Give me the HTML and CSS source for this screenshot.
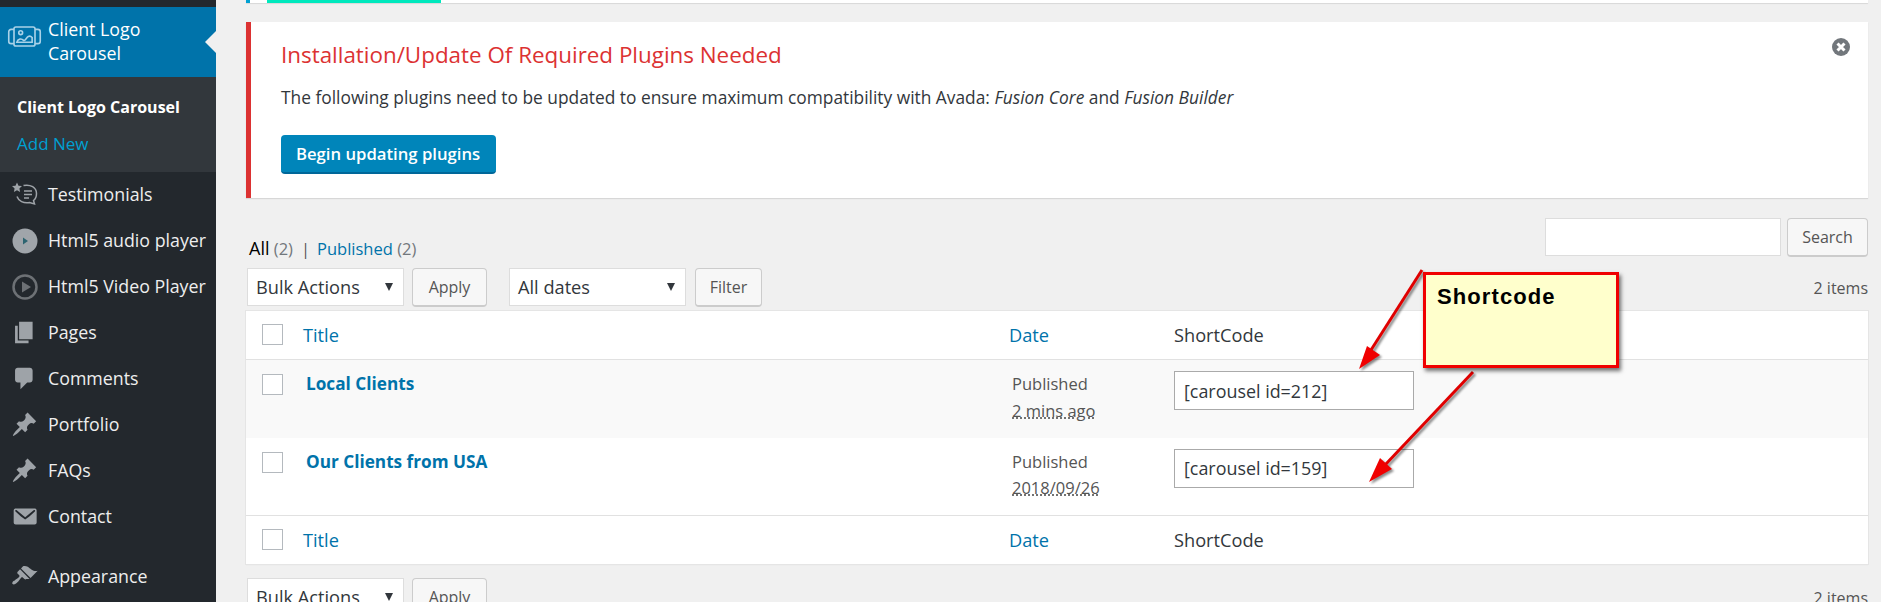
FILE: index.html
```html
<!DOCTYPE html>
<html lang="en">
<head>
<meta charset="utf-8">
<title>Client Logo Carousel</title>
<link rel="stylesheet" href="styles.css">
</head>
<body>
<aside class="sidebar">
  <nav class="menu">
    <div class="menu-top"></div>
    <a class="item active">
      <svg class="icon carousel" viewBox="0 0 36 22" fill="none" stroke="#a9d2e8" stroke-width="1.7"><rect x="7" y="1" width="22" height="20" rx="2"/><path d="M7 3.500H4a2.500 2.500 0 0 0-2.500 2.500v10A2.500 2.500 0 0 0 4 18.500h3M29 3.500h3a2.500 2.500 0 0 1 2.500 2.500v10a2.500 2.500 0 0 1-2.500 2.500h-3"/><circle cx="14" cy="7" r="2"/><path d="M10 17c1-4 5-4 7-2 2 1 3-3 5-4 1-.500 3 0 4 1v5z"/></svg>
      <span>Client Logo<br>Carousel</span>
    </a>
    <div class="submenu">
      <a class="sub current">Client Logo Carousel</a>
      <a class="sub">Add New</a>
    </div>
    <a class="item">
      <svg class="icon testi" viewBox="0 0 28 24" fill="none" stroke="#9ea3a8" stroke-width="1.500"><path d="M6 .500l1.500 3.200 3.500.400-2.600 2.400.7 3.500L6 8.300 2.900 10l.7-3.500L1 4.100l3.500-.400z" fill="#9ea3a8" stroke="none"/><path d="M12.500 3.500c7-1.500 13 2 13 8 0 3.500-1 5.500-3 7l1 3.500-5-1.500c-6 1-11-1.500-12.500-6"/><path d="M13 9h8M13 12.500h8M13 16h5" stroke-width="1.300"/></svg>
      <span>Testimonials</span>
    </a>
    <a class="item">
      <svg class="icon round" viewBox="0 0 26 26"><circle cx="13" cy="13" r="12.500" fill="#a0a5aa"/><path d="M11 9.500l5 3.500-5 3.500z" fill="#2c6470"/></svg>
      <span>Html5 audio player</span>
    </a>
    <a class="item">
      <svg class="icon round" viewBox="0 0 26 26" fill="none"><circle cx="13" cy="13" r="11.500" stroke="#6d7175" stroke-width="2.500"/><path d="M10 7.500l9 5.500-9 5.500z" fill="#6d7175"/></svg>
      <span>Html5 Video Player</span>
    </a>
    <a class="item">
      <svg class="icon dash" viewBox="0 0 20 20"><use href="#d-page"/></svg>
      <span>Pages</span>
    </a>
    <a class="item">
      <svg class="icon dash" viewBox="0 0 20 20"><use href="#d-comment"/></svg>
      <span>Comments</span>
    </a>
    <a class="item">
      <svg class="icon dash" viewBox="0 0 20 20"><use href="#d-pin"/></svg>
      <span>Portfolio</span>
    </a>
    <a class="item">
      <svg class="icon dash" viewBox="0 0 20 20"><use href="#d-pin"/></svg>
      <span>FAQs</span>
    </a>
    <a class="item">
      <svg class="icon dash" viewBox="0 0 20 20"><use href="#d-mail"/></svg>
      <span>Contact</span>
    </a>
    <a class="item spaced">
      <svg class="icon dash" viewBox="0 0 20 20"><use href="#d-brush"/></svg>
      <span>Appearance</span>
    </a>
  </nav>
</aside>

<main class="content">
  <div class="top-strip"><i class="strip-blue"></i><i class="strip-teal"></i></div>

  <section class="notice">
    <h2 class="notice-title">Installation/Update Of Required Plugins Needed</h2>
    <p class="notice-text">The following plugins need to be updated to ensure maximum compatibility with Avada: <em>Fusion Core</em> and <em>Fusion Builder</em></p>
    <a class="primary-btn">Begin updating plugins</a>
    <svg class="dismiss" viewBox="0 0 18 18"><circle cx="9" cy="9" r="9" fill="#72777c"/><path d="M5.500 5.500l7 7M12.500 5.500l-7 7" stroke="#fff" stroke-width="3"/></svg>
  </section>

  <div class="filters-top">
    <div class="views"><b class="view-current">All</b> <span class="count">(2)</span><span class="sep">|</span><a class="link">Published</a> <span class="count">(2)</span></div>
    <div class="search"><input class="search-box" type="text" aria-label="Search"><button class="btn search-btn">Search</button></div>
  </div>

  <div class="tablenav">
    <div class="select wide">Bulk Actions<i class="caret"></i></div>
    <button class="btn apply">Apply</button>
    <div class="select dates">All dates<i class="caret"></i></div>
    <button class="btn filter">Filter</button>
    <span class="items">2 items</span>
  </div>

  <table class="list">
    <thead>
      <tr class="head"><td class="c-check"><i class="check"></i></td><td class="c-title"><a class="link">Title</a></td><td class="c-date"><a class="link">Date</a></td><td>ShortCode</td></tr>
    </thead>
    <tbody>
      <tr class="row alt">
        <td class="c-check"><i class="check"></i></td>
        <td class="c-title"><a class="row-title">Local Clients</a></td>
        <td class="c-date body-date">Published<br><abbr class="when">2 mins ago</abbr></td>
        <td><input class="code" type="text" value="[carousel id=212]" aria-label="Shortcode"></td>
      </tr>
      <tr class="row">
        <td class="c-check"><i class="check"></i></td>
        <td class="c-title"><a class="row-title">Our Clients from USA</a></td>
        <td class="c-date body-date">Published<br><abbr class="when">2018/09/26</abbr></td>
        <td><input class="code" type="text" value="[carousel id=159]" aria-label="Shortcode"></td>
      </tr>
    </tbody>
    <tfoot>
      <tr class="foot"><td class="c-check"><i class="check"></i></td><td class="c-title"><a class="link">Title</a></td><td class="c-date"><a class="link">Date</a></td><td>ShortCode</td></tr>
    </tfoot>
  </table>

  <div class="tablenav bottom">
    <div class="select wide">Bulk Actions<i class="caret"></i></div>
    <button class="btn apply">Apply</button>
    <span class="items">2 items</span>
  </div>
</main>

<svg class="annotation-arrows" viewBox="0 0 1881 602">
  <g class="arrow-group">
    <path d="M1422 270L1371 350" stroke="#e00000" stroke-width="3" fill="none"/>
    <path d="M1359 369L1367 346L1380 355z" fill="#f00000"/>
    <path d="M1473 372L1385 465" stroke="#e00000" stroke-width="3" fill="none"/>
    <path d="M1369 482L1380 458L1392 469z" fill="#f00000"/>
  </g>
</svg>
<div class="callout">Shortcode</div>

<svg class="sprites" aria-hidden="true">
  <symbol id="d-page" viewBox="0 0 20 20"><path d="M6 15V2h10v13H6zm-1 1h8v2H3V5h2v11z"/></symbol>
  <symbol id="d-comment" viewBox="0 0 20 20"><path d="M5 2h9c1.100 0 2 .9 2 2v7c0 1.100-.9 2-2 2h-2l-5 5v-5H5c-1.100 0-2-.9-2-2V4c0-1.100.9-2 2-2z"/></symbol>
  <symbol id="d-pin" viewBox="0 0 20 20"><path d="M10.440 3.020l1.820-1.820 6.360 6.350-1.830 1.820c-1.050-.68-2.480-.57-3.410.36l-.75.75c-.92.93-1.040 2.350-.35 3.410l-1.830 1.820-2.410-2.410-2.800 2.790c-.42.42-3.380 2.710-3.800 2.290s1.860-3.390 2.280-3.810l2.790-2.790L4.100 9.360l1.830-1.820c1.050.69 2.480.57 3.400-.36l.75-.75c.93-.92 1.050-2.350.36-3.410z"/></symbol>
  <symbol id="d-mail" viewBox="0 0 20 20"><path d="M19 14.500v-9c0-.83-.67-1.500-1.500-1.500H3.490c-.83 0-1.500.67-1.500 1.500v9c0 .83.67 1.500 1.500 1.500H17.500c.83 0 1.500-.67 1.500-1.500zm-1.310-9.110c.33.33.15.67-.03.84L13.600 9.950l-3.100 2.300-3.100-2.300-4.060-3.720c-.18-.17-.36-.51-.03-.84s.67-.17.95.07l6.240 5.040 6.250-5.040c.28-.24.62-.4.95-.07z"/></symbol>
  <symbol id="d-brush" viewBox="0 0 20 20"><path d="M14.480 11.060L7.410 3.990l1.500-1.500c.5-.56 2.300-.47 3.510.32 1.210.8 1.430 1.280 2.910 2.100 1.180.64 2.450 1.260 4.450.85zm-.71.71L6.700 4.700 4.930 6.470c-.39.39-.39 1.020 0 1.410l1.060 1.060c.39.39.39 1.030 0 1.420-.6.6-1.430 1.110-2.210 1.690-.35.26-.7.53-1.010.84C1.430 13.230.4 14.760 1.250 15.600c.84.85 2.370-.18 3.710-1.520.31-.31.58-.66.84-1.010.58-.78 1.090-1.610 1.690-2.210.39-.39 1.020-.39 1.410 0l1.060 1.060c.39.39 1.020.39 1.410 0z"/></symbol>
</svg>
</body>
</html>
```

FILE: styles.css
```css
* { box-sizing: border-box; }
html, body { height: 100%; }
body {
  margin: 0;
  display: flex;
  height: 602px;
  overflow: hidden;
  background: #f0f0f0;
  color: #444;
  font-family: "Open Sans", "Noto Sans", sans-serif;
  font-size: 16px;
}
a { text-decoration: none; }

/* sidebar */
.sidebar { width: 216px; flex: none; background: #23282d; color: #eee; }
.menu-top { height: 7px; }
.item {
  position: relative;
  display: flex;
  align-items: center;
  height: 46px;
  padding: 0 0 2px 48px;
  color: #eee;
  font-size: 17.8px;
  white-space: nowrap;
}
.item.spaced { margin-top: 14px; }
.item.active {
  height: 70px;
  background: #0073aa;
  color: #fff;
  line-height: 24px;
}
.item.active::after {
  content: "";
  position: absolute;
  right: 0;
  top: 24px;
  border: 11px solid transparent;
  border-right-color: #f0f0f0;
  border-left-width: 0;
}
.icon { position: absolute; }
.carousel { left: 7px; top: 19px; width: 35px; height: 21px; }
.testi { left: 11px; top: 10px; width: 28px; height: 24px; }
.round { left: 12px; top: 10px; width: 26px; height: 26px; }
.dash { left: 11px; top: 9px; width: 27px; height: 27px; fill: #9ea3a8; }
.submenu {
  display: flex;
  flex-direction: column;
  height: 95px;
  padding: 12px 0 0 17px;
  background: #32373c;
}
.sub { height: 37px; line-height: 36px; color: #00a0d2; font-size: 17px; white-space: nowrap; }
.sub.current { color: #fff; font-weight: 700; font-size: 16px; }

/* content */
.content { flex: 1; min-width: 0; padding: 0 13px 0 30px; }
.top-strip {
  display: flex;
  height: 3px;
  background: #fff;
  box-shadow: 0 1px 1px rgba(0,0,0,.1);
}
.strip-blue { width: 4px; background: #00a0d2; }
.strip-teal { width: 174px; margin-left: 17px; background: #00e8bd; }

.notice {
  position: relative;
  height: 176px;
  margin-top: 19px;
  padding: 20px 0 0 30px;
  background: #fff;
  border-left: 5px solid #dc3232;
  box-shadow: 0 1px 1px rgba(0,0,0,.1);
}
.notice-title {
  margin: 0;
  color: #dc3232;
  font-size: 22.4px;
  font-weight: 400;
  line-height: 26px;
  white-space: nowrap;
}
.notice-text { margin: 16px 0 0; font-size: 17.35px; line-height: 26px; white-space: nowrap; color: #32373c; }
.primary-btn {
  display: inline-flex;
  align-items: center;
  height: 39px;
  margin-top: 25px;
  padding: 0 16px 0 15px;
  border-radius: 4px;
  background: #0085ba;
  border-bottom: 2px solid #006799;
  color: #fff;
  font-weight: 600;
  font-size: 16.7px;
}
.dismiss { position: absolute; right: 18px; top: 16px; width: 18px; height: 18px; }

.filters-top {
  display: flex;
  justify-content: space-between;
  align-items: flex-start;
  height: 39px;
  margin-top: 20px;
}
.views { padding: 19px 0 0 3px; font-size: 16.5px; line-height: 22px; white-space: nowrap; }
.view-current { color: #000; font-weight: 400; font-size: 18px; }
.count { color: #72777c; }
.sep { margin: 0 7px 0 8px; color: #555; }
.link { color: #0073aa; }
.search { display: flex; gap: 6px; }
.search-box {
  width: 236px;
  height: 38px;
  margin: 0;
  border: 1px solid #ddd;
  background: #fff;
}
.btn {
  height: 39px;
  margin: 0;
  padding: 0;
  border: 1px solid #ccc;
  border-bottom-width: 2px;
  border-radius: 4px;
  background: #f7f7f7;
  color: #555;
  font: inherit;
}
.search-btn { width: 81px; }
.tablenav {
  display: flex;
  align-items: flex-start;
  height: 43px;
  margin-top: 11px;
}
.select {
  position: relative;
  height: 38px;
  padding-left: 8px;
  border: 1px solid #ddd;
  background: #fff;
  color: #32373c;
  font-size: 18.2px;
  line-height: 36px;
  white-space: nowrap;
}
.wide { width: 157px; margin-left: 1px; }
.dates { width: 177px; margin-left: 22px; }
.caret {
  position: absolute;
  right: 10px;
  top: 14px;
  border: 4px solid transparent;
  border-top: 8px solid #32373c;
  border-bottom: 0;
}
.apply { width: 75px; margin-left: 8px; }
.filter { width: 67px; margin-left: 9px; }
.items { margin-left: auto; line-height: 40px; color: #555; }

.list {
  width: 100%;
  table-layout: fixed;
  border-collapse: collapse;
  background: #fff;
  box-shadow: 0 0 0 1px #e5e5e5, 0 1px 1px rgba(0,0,0,.08);
  color: #32373c;
}
.list td { padding: 0; vertical-align: top; }
.c-check { width: 57px; padding-left: 16px !important; }
.c-title { width: 706px; }
.c-date { width: 165px; }
.head, .foot { height: 48px; font-size: 18.2px; }
.head { border-bottom: 1px solid #e1e1e1; }
.foot { border-top: 1px solid #e1e1e1; }
.head td, .foot td { line-height: 48px; }
.row { height: 78px; }
.row.alt { background: #f9f9f9; }
.row td { padding-top: 11px; }
.check {
  display: block;
  width: 21px;
  height: 21px;
  margin-top: 13px;
  border: 1px solid #b4b9be;
  background: #fff;
}
.row .check { margin-top: 3px; }
.row-title { padding-left: 3px; color: #0073aa; font-weight: 700; font-size: 17.2px; line-height: 26px; }
.body-date { padding-left: 3px !important; color: #555; font-size: 16.5px; line-height: 26.5px; }
.when { text-decoration: underline dotted; }
.code {
  display: block;
  width: 240px;
  height: 39px;
  padding: 0 9px;
  border: 1px solid #aaa;
  background: #fff;
  color: #32373c;
  font: inherit;
  font-size: 17.9px;
}
.bottom { margin-top: 14px; }

/* annotations */
.annotation-arrows {
  position: absolute;
  left: 0;
  top: 0;
  width: 1881px;
  height: 602px;
  pointer-events: none;
  filter: drop-shadow(2px 2px 1px rgba(0,0,0,.45));
}
.callout {
  position: absolute;
  left: 1423px;
  top: 272px;
  width: 196px;
  height: 96px;
  padding: 9px 0 0 11px;
  border: 3px solid #f00000;
  background: #ffffcc;
  box-shadow: 2px 3px 4px rgba(0,0,0,.55);
  color: #000;
  font-family: "Liberation Sans", Arial, sans-serif;
  font-size: 22px;
  font-weight: 700;
  letter-spacing: 1.1px;
}
.sprites { position: absolute; width: 0; height: 0; }
```
